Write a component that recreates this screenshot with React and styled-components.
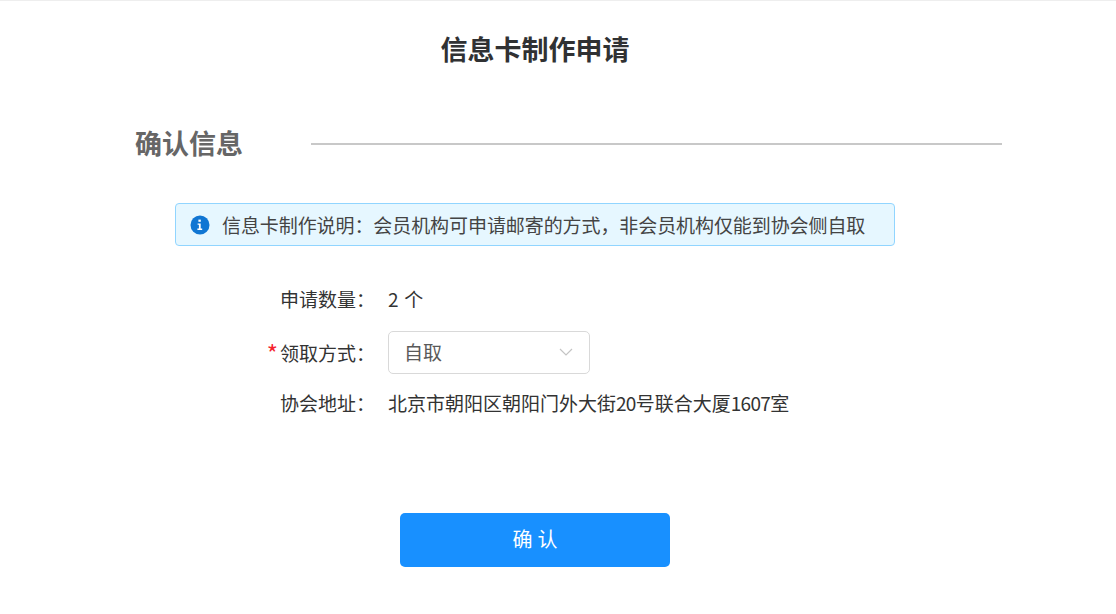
import React from 'react'
import styled, { createGlobalStyle } from 'styled-components'

const GlobalStyle = createGlobalStyle`
  html, body {
    margin: 0;
    padding: 0;
    background: #fff;
    font-family: 'Noto Sans CJK SC', 'Liberation Sans', sans-serif;
  }
`

const TopLine = styled.div`
  height: 1px;
  background: #eeeeee;
`

const Page = styled.div`
  width: 934px;
  margin-left: 68px;
  display: flex;
  flex-direction: column;
  align-items: center;
`

const Title = styled.h1`
  margin: 28px 0 0;
  font-size: 27px;
  line-height: 40px;
  font-weight: 700;
  color: #303133;
`

const SectionHeader = styled.div`
  align-self: stretch;
  display: flex;
  align-items: center;
  margin-top: 55px;
  padding-left: 67px;
`

const SectionTitle = styled.h2`
  margin: 0;
  width: 176px;
  padding-bottom: 2px;
  font-size: 27px;
  line-height: 38px;
  font-weight: 700;
  color: #666666;
`

const SectionLine = styled.div`
  flex: 1;
  height: 2px;
  background: #c8c8c8;
`

const Alert = styled.div`
  box-sizing: border-box;
  width: 720px;
  height: 43px;
  margin-top: 39px;
  display: flex;
  align-items: center;
  gap: 12px;
  padding-left: 14px;
  background: #e6f7ff;
  border: 1px solid #91d5ff;
  border-radius: 4px;
  font-size: 19px;
  letter-spacing: -0.08px;
  color: #444444;
  white-space: nowrap;
`

const Form = styled.div`
  align-self: stretch;
  margin-top: 31px;
  padding-left: 197px;
  display: grid;
  grid-template-columns: 110px auto;
  column-gap: 13px;
  justify-content: start;
  align-items: center;
  font-size: 19px;
  color: #333333;
`

const Label = styled.div`
  display: flex;
  justify-content: flex-end;
  white-space: nowrap;
  line-height: 44px;
  padding-top: ${p => p.$offset || 0}px;
`

const Required = styled.span`
  font-size: 24px;
  color: #f5222d;
  margin-right: 2px;
`

const Value = styled.div`
  white-space: nowrap;
  line-height: 44px;
  word-spacing: 1.5px;
`

const Digits = styled.span`
  letter-spacing: -0.7px;
`

const Select = styled.div`
  box-sizing: border-box;
  width: 202px;
  height: 43px;
  margin: 10px 0 7px;
  display: flex;
  align-items: center;
  justify-content: space-between;
  padding: 0 16px 2px 15px;
  background: #fff;
  border: 1px solid #d9d9d9;
  border-radius: 5px;
  color: #595959;
`

const Submit = styled.button`
  width: 270px;
  height: 54px;
  margin-top: 88px;
  padding: 0 0 3px 5px;
  border: none;
  border-radius: 5px;
  background: #1890ff;
  color: #fff;
  font-family: inherit;
  font-size: 20px;
  letter-spacing: 5px;
`

const InfoIcon = () => (
  <svg width="20" height="20" viewBox="0 0 20 20">
    <circle cx="10" cy="10" r="9.5" fill="#1076d3" />
    <rect x="8.4" y="4.6" width="2.4" height="2.2" fill="#fff" />
    <path d="M7.6 8.4h3.1v5.2h1.5v1.4H7.4v-1.4h1.5V9.8H7.6z" fill="#fff" />
  </svg>
)

const ChevronIcon = () => (
  <svg width="14" height="8" viewBox="0 0 14 8" fill="none">
    <path d="M1 1l6 6 6-6" stroke="#c4c4c4" strokeWidth="1.2" />
  </svg>
)

const App = () => (
  <>
    <GlobalStyle />
    <TopLine />
    <Page>
      <Title>信息卡制作申请</Title>
      <SectionHeader>
        <SectionTitle>确认信息</SectionTitle>
        <SectionLine />
      </SectionHeader>
      <Alert>
        <InfoIcon />
        <span>{'信息卡制作说明\uFF1A会员机构可申请邮寄的方式\uFF0C非会员机构仅能到协会侧自取'}</span>
      </Alert>
      <Form>
        <Label>{'申请数量\uFF1A'}</Label>
        <Value>2 个</Value>
        <Label $offset={4}>
          <Required>*</Required>
          {'领取方式\uFF1A'}
        </Label>
        <Select>
          <span>自取</span>
          <ChevronIcon />
        </Select>
        <Label>{'协会地址\uFF1A'}</Label>
        <Value>
          北京市朝阳区朝阳门外大街<Digits>20</Digits>号联合大厦<Digits>1607</Digits>室
        </Value>
      </Form>
      <Submit>确认</Submit>
    </Page>
  </>
)

export default App
